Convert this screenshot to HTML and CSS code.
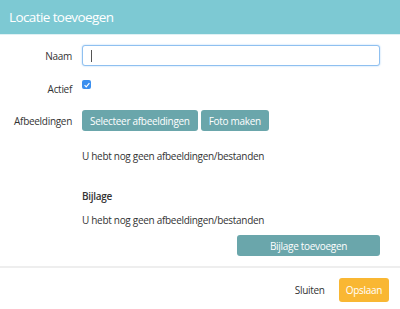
FILE: index.html
```html
<!DOCTYPE html>
<html lang="nl">
<head>
    <meta charset="UTF-8">
    <title>Locatie toevoegen</title>
    <link rel="stylesheet" href="styles.css">
</head>
<body>
    <div class="modal">
        <div class="modal-header">
            <h1>Locatie toevoegen</h1>
        </div>
        <div class="modal-body">
            <div class="row row-name">
                <label class="label" for="naam">Naam</label>
                <div class="field"><input class="input" type="text" id="naam"><span class="caret"></span></div>
            </div>
            <div class="row row-active">
                <label class="label" for="actief">Actief</label>
                <div class="field"><span class="check"><svg width="8" height="8" viewBox="0 0 8 8"><path d="M1.6 4.2 L3.2 5.8 L6.4 2.2" fill="none" stroke="#fff" stroke-width="1.2"/></svg></span></div>
            </div>
            <div class="row row-images">
                <span class="label">Afbeeldingen</span>
                <div class="field buttons">
                    <button class="btn btn-teal">Selecteer afbeeldingen</button>
                    <button class="btn btn-teal">Foto maken</button>
                </div>
            </div>
            <p class="empty first">U hebt nog geen afbeeldingen/bestanden</p>
            <h2 class="sub">Bijlage</h2>
            <p class="empty">U hebt nog geen afbeeldingen/bestanden</p>
            <div class="attach">
                <button class="btn btn-teal btn-wide">Bijlage toevoegen</button>
            </div>
        </div>
        <div class="modal-footer">
            <button class="btn-link">Sluiten</button>
            <button class="btn btn-orange">Opslaan</button>
        </div>
    </div>
</body>
</html>
```

FILE: styles.css
```css
body {
    margin: 0;
    font-family: "Open Sans", sans-serif;
    font-size: 10px;
    letter-spacing: -0.3px;
    color: #333;
    background: #fff;
}
.modal {
    width: 400px;
    height: 309px;
    overflow: hidden;
}
.modal-header {
    height: 34px;
    background: #7dc9d3;
    border-bottom: 1px solid #dff1f4;
    display: flex;
    align-items: center;
    padding-left: 9px;
}
.modal-header h1 {
    margin: 0;
    color: #fff;
    font-size: 13.5px;
    font-weight: 400;
    letter-spacing: -0.6px;
}
.modal-body {
    padding: 10px 20px 10px 0;
}
.row {
    display: flex;
    align-items: center;
}
.label {
    width: 72px;
    padding-right: 10px;
    text-align: right;
    flex-shrink: 0;
}
.field {
    flex: 1;
    position: relative;
}
.input {
    box-sizing: border-box;
    width: 100%;
    height: 21px;
    border: 1px solid #8fc0f0;
    border-radius: 3px;
    box-shadow: 0 0 2px #a9d0f7;
    outline: none;
    display: block;
}
.caret {
    position: absolute;
    left: 9px;
    top: 5px;
    width: 1px;
    height: 12px;
    background: #555;
}
.row-active {
    margin-top: 14px;
    align-items: flex-start;
}
.row-active .label {
    padding-top: 2px;
}
.check {
    display: flex;
    align-items: center;
    justify-content: center;
    width: 9px;
    height: 9px;
    background: #3b8fef;
    border-radius: 2px;
}
.row-images {
    margin-top: 14px;
}
.buttons {
    display: flex;
    gap: 3px;
}
.btn {
    font-family: "Open Sans", sans-serif;
    font-size: 10px;
    letter-spacing: -0.3px;
    color: #fff;
    border: none;
    border-radius: 3px;
    height: 21px;
    padding: 0 8px;
    cursor: pointer;
}
.btn-teal {
    background: #6aa6ab;
}
.empty {
    margin: 0;
    padding-left: 82px;
}
.empty.first {
    margin-top: 18px;
}
.sub {
    margin: 26px 0 0;
    padding-left: 82px;
    font-size: 10px;
    font-weight: 600;
}
.sub + .empty {
    margin-top: 10px;
}
.attach {
    display: flex;
    justify-content: flex-end;
    margin-top: 8px;
}
.btn-wide {
    width: 143px;
}
.modal-footer {
    border-top: 2px solid #eeeeee;
    display: flex;
    justify-content: flex-end;
    align-items: center;
    gap: 14px;
    padding: 10px 11px 0 0;
}
.btn-link {
    background: none;
    border: none;
    font-family: "Open Sans", sans-serif;
    font-size: 10px;
    letter-spacing: -0.3px;
    color: #333;
    padding: 0;
}
.btn-orange {
    background: #f9b733;
    height: 24px;
    padding: 0 7px;
}
```
